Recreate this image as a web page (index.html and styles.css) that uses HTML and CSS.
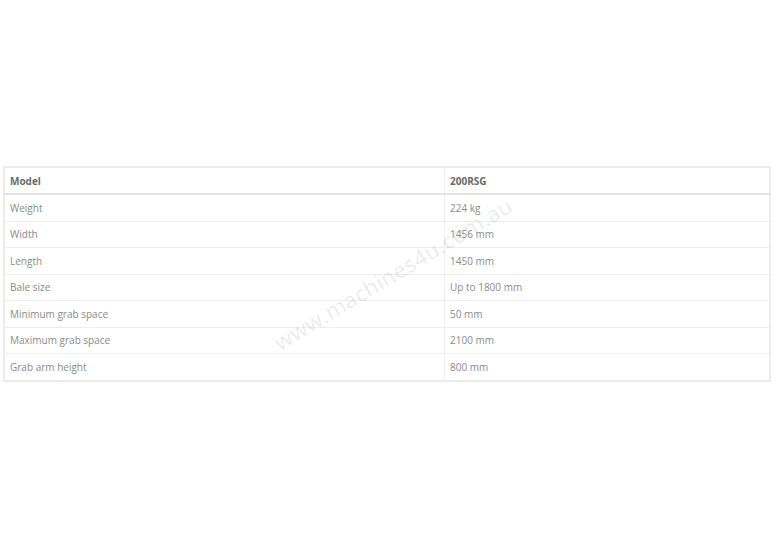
FILE: index.html
```html
<!DOCTYPE html>
<html lang="en">
<head>
  <meta charset="UTF-8" />
  <title>200RSG Specifications</title>
  <link rel="stylesheet" href="styles.css">
</head>
<body>
  <div class="page">
    <!-- spec table -->
    <table class="spec-table">
      <thead>
        <tr>
          <th>Model</th>
          <th>200RSG</th>
        </tr>
      </thead>
      <tbody>
        <tr><td>Weight</td><td>224 kg</td></tr>
        <tr><td>Width</td><td>1456 mm</td></tr>
        <tr><td>Length</td><td>1450 mm</td></tr>
        <tr><td>Bale size</td><td>Up to 1800 mm</td></tr>
        <tr><td>Minimum grab space</td><td>50 mm</td></tr>
        <tr><td>Maximum grab space</td><td>2100 mm</td></tr>
        <tr><td>Grab arm height</td><td>800 mm</td></tr>
      </tbody>
    </table>
    <!-- watermark -->
    <div class="watermark">www.machines4u.com.au</div>
  </div>
</body>
</html>
```

FILE: styles.css
```css
html, body {
  margin: 0;
  padding: 0;
  background: #fff;
  font-family: "Open Sans", "Liberation Sans", sans-serif;
}

.page {
  position: relative;
  width: 780px;
  height: 550px;
  padding: 166px 9px 0 3px;
  box-sizing: border-box;
}

/* spec table */
.spec-table {
  width: 100%;
  border-collapse: collapse;
  border: 2px solid #ececec;
  font-size: 10px;
  color: #8a8a8a;
}

.spec-table th,
.spec-table td {
  text-align: left;
  padding: 0 5px;
  height: 25.5px;
  border-bottom: 1px solid #eeeeee;
}

.spec-table th {
  font-weight: bold;
  color: #6a6a6a;
  height: 25px;
  border-bottom: 2px solid #e4e4e4;
}

.spec-table th:first-child,
.spec-table td:first-child {
  width: 429px;
  border-right: 1px solid #eeeeee;
}

.spec-table tbody tr:last-child td {
  border-bottom: none;
}

/* watermark text over the table */
.watermark {
  position: absolute;
  left: 256px;
  top: 258px;
  font-size: 22px;
  color: rgba(0, 0, 0, 0.09);
  transform: rotate(-31deg);
  letter-spacing: 0.5px;
  white-space: nowrap;
}
```
